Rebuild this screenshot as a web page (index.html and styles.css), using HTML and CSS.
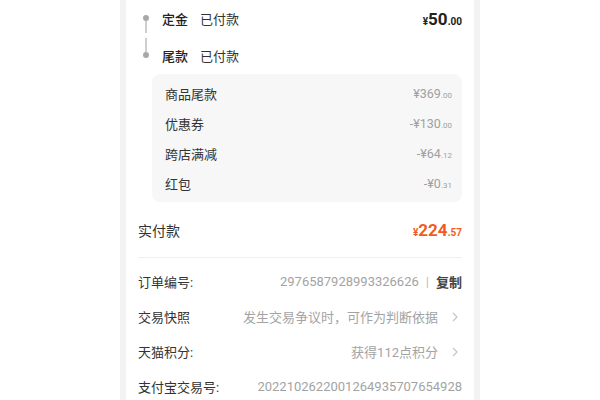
FILE: index.html
```html
<!DOCTYPE html>
<html lang="zh">
<head>
<meta charset="utf-8">
<link rel="stylesheet" href="styles.css">
</head>
<body>
<div class="page">
  <div class="card">
    <div class="timeline">
      <div class="trow">
        <span class="tdot first"></span>
        <span class="tname">定金</span><span class="tstate">已付款</span>
        <span class="tamount"><span class="cur">¥</span><span class="big">50</span><span class="dec">.00</span></span>
      </div>
      <div class="trow">
        <span class="tdot last"></span>
        <span class="tname">尾款</span><span class="tstate">已付款</span>
      </div>
    </div>
    <div class="detail">
      <div class="drow"><span>商品尾款</span><span class="dval">¥369<small>.00</small></span></div>
      <div class="drow"><span>优惠券</span><span class="dval">-¥130<small>.00</small></span></div>
      <div class="drow"><span>跨店满减</span><span class="dval">-¥64<small>.12</small></span></div>
      <div class="drow"><span>红包</span><span class="dval">-¥0<small>.31</small></span></div>
    </div>
    <div class="paid">
      <span class="plabel">实付款</span>
      <span class="pamount"><span class="cur">¥</span><span class="big">224</span><span class="dec">.57</span></span>
    </div>
    <div class="info">
      <div class="irow"><span class="ilabel">订单编号:</span><span class="ival">2976587928993326626<span class="sep">|</span><b class="copy">复制</b></span></div>
      <div class="irow"><span class="ilabel">交易快照</span><span class="ival">发生交易争议时，可作为判断依据<svg class="chev" width="6" height="10" viewBox="0 0 6 10"><polyline points="1,1 5,5 1,9" fill="none" stroke="#c4c4c4" stroke-width="1.2"/></svg></span></div>
      <div class="irow"><span class="ilabel">天猫积分:</span><span class="ival">获得112点积分<svg class="chev" width="6" height="10" viewBox="0 0 6 10"><polyline points="1,1 5,5 1,9" fill="none" stroke="#c4c4c4" stroke-width="1.2"/></svg></span></div>
      <div class="irow"><span class="ilabel">支付宝交易号:</span><span class="ival">2022102622001264935707654928</span></div>
    </div>
  </div>
</div>
</body>
</html>
```

FILE: styles.css
```css
* { box-sizing: border-box; }
html, body { margin: 0; padding: 0; background: #ffffff; }
body {
  font-family: Roboto, "Noto Sans CJK SC", sans-serif;
  color: #333333;
}
.page {
  width: 360px;
  height: 400px;
  margin: 0 auto;
  background: #f3f3f3;
  padding: 0 6px;
  overflow: hidden;
}
.card {
  background: #ffffff;
  height: 100%;
  padding: 0 12px;
}
.timeline { display: flex; flex-direction: column; }
.trow {
  position: relative;
  height: 37px;
  display: flex;
  align-items: center;
  padding-left: 24px;
  font-size: 13px;
}
.tdot {
  position: absolute;
  left: 5px;
  top: 15px;
  width: 6px;
  height: 6px;
  border-radius: 50%;
  background: #a8a8a8;
}
.tdot.first::after {
  content: "";
  position: absolute;
  left: 2px;
  top: 6px;
  width: 1.5px;
  height: 12px;
  background: #cfcfcf;
}
.tdot.last::before {
  content: "";
  position: absolute;
  left: 2px;
  bottom: 6px;
  width: 1.5px;
  height: 14px;
  background: #cfcfcf;
}
.tname { color: #222; font-weight: 500; width: 38px; }
.tstate { color: #333; }
.tamount { margin-left: auto; color: #222; font-weight: 700; }
.cur { font-size: 10px; }
.big { font-size: 17px; }
.dec { font-size: 10px; }
.detail {
  margin-left: 14px;
  background: #f7f7f7;
  border-radius: 8px;
  padding: 4px 10px 4px 13px;
}
.drow {
  height: 30px;
  display: flex;
  align-items: center;
  justify-content: space-between;
  font-size: 13px;
  color: #333;
}
.dval { color: #a0a0a0; font-size: 12.5px; }
.dval small { font-size: 8px; }
.paid {
  height: 56px;
  display: flex;
  align-items: center;
  justify-content: space-between;
  border-bottom: 1px solid #efefef;
}
.plabel { font-size: 14px; color: #333; }
.pamount { color: #f25a26; font-weight: 700; }
.pamount .big { font-size: 17px; }
.info { padding-top: 6px; }
.irow {
  height: 35px;
  display: flex;
  align-items: center;
  justify-content: space-between;
  font-size: 13px;
}
.ilabel { color: #333; }
.ival { color: #a3a3a3; display: flex; align-items: center; }
.sep { color: #bbb; margin: 0 7px; }
.copy { color: #444; font-weight: 700; }
.chev { margin-left: 14px; margin-right: 4px; }
```
